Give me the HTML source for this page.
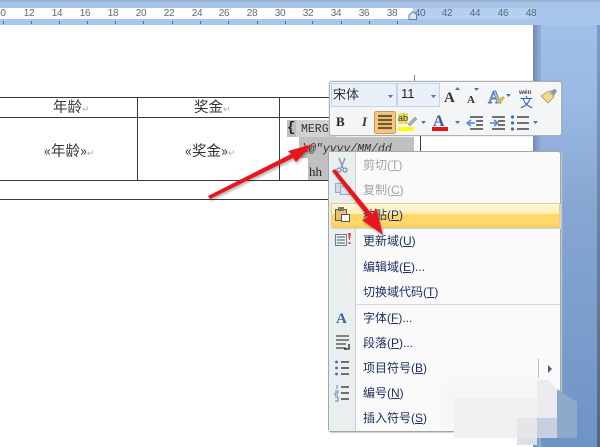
<!DOCTYPE html>
<html><head><meta charset="utf-8">
<style>
html,body{margin:0;padding:0;width:600px;height:447px;overflow:hidden;background:#fff}
body{font-family:"Liberation Sans","Noto Sans CJK SC",sans-serif}
#w{position:absolute;left:0;top:0;width:600px;height:447px;overflow:hidden;filter:blur(.35px)}
.a{position:absolute}
.r{position:absolute;top:8px;font-size:10px;line-height:11px;color:#5a6a80;width:20px;text-align:center;letter-spacing:-.3px}
.t{position:absolute;top:21px;width:1px;height:3px;background:#55667c}
.l{position:absolute;background:#3a3a3a}
.c{position:absolute;font-family:"Noto Sans CJK SC",sans-serif;font-size:14.500px;line-height:18px;color:#333;white-space:nowrap}
.m{position:absolute;left:363px;font-size:12px;line-height:16px;color:#1f2f66;white-space:nowrap;font-family:"Liberation Sans","Noto Sans CJK SC",sans-serif}
.m u{text-underline-offset:1px}
.d{color:#a3a3a3}
</style></head>
<body><div id="w">
<!-- right background -->
<div class="a" style="left:533px;top:0;width:67px;height:447px;background:linear-gradient(#a3c2e9 0,#9abae4 100px,#86a6d2 210px,#6d94c6 447px)"></div>
<div class="a" style="left:533px;top:25px;width:8px;height:422px;background:linear-gradient(90deg,#6f8cb8,#8fafdc)"></div>
<div class="a" style="left:597px;top:25px;width:3px;height:422px;background:linear-gradient(#7b9ccb,#5a6478)"></div>
<!-- top -->
<div class="a" style="left:0;top:0;width:600px;height:2px;background:#9db0cc"></div>
<div class="a" style="left:0;top:2px;width:600px;height:6px;background:#a5c3e8"></div>
<div class="a" style="left:0;top:8px;width:600px;height:17px;background:#a8c5ea"></div>
<div class="a" style="left:0;top:8px;width:413px;height:11px;background:#fff"></div>
<div class="a" style="left:413px;top:8px;width:122px;height:11px;background:#b6cfee"></div>
<div class="a" style="left:0;top:25px;width:533px;height:422px;background:#fff"></div>
<!-- ruler -->
<div class="r" style="left:-7px">0</div><div class="r" style="left:19px">12</div><div class="r" style="left:47px">14</div><div class="r" style="left:75px">16</div><div class="r" style="left:103px">18</div><div class="r" style="left:131px">20</div><div class="r" style="left:159px">22</div><div class="r" style="left:187px">24</div><div class="r" style="left:214px">26</div><div class="r" style="left:242px">28</div><div class="r" style="left:270px">30</div><div class="r" style="left:298px">32</div><div class="r" style="left:326px">34</div><div class="r" style="left:354px">36</div><div class="r" style="left:382px">38</div><div class="r" style="left:410px">40</div><div class="r" style="left:437px">42</div><div class="r" style="left:465px">44</div><div class="r" style="left:493px">46</div><div class="r" style="left:521px">48</div>
<div class="t" style="left:3px"></div><div class="t" style="left:31px"></div><div class="t" style="left:59px"></div><div class="t" style="left:87px"></div><div class="t" style="left:115px"></div><div class="t" style="left:143px"></div><div class="t" style="left:172px"></div><div class="t" style="left:200px"></div><div class="t" style="left:228px"></div><div class="t" style="left:257px"></div><div class="t" style="left:285px"></div><div class="t" style="left:312px"></div><div class="t" style="left:341px"></div><div class="t" style="left:369px"></div><div class="t" style="left:397px"></div>
<svg class="a" style="left:408px;top:10px" width="10" height="10"><path d="M1 9.500V5L5 1.500L8.500 4.500V9.500Z" fill="#dbe7f6" stroke="#5f7ea6"/></svg>
<!-- table -->
<div class="a" style="left:414px;top:75px;width:1px;height:6px;background:#888"></div>
<div class="l" style="left:0;top:97px;width:420px;height:1px"></div>
<div class="l" style="left:0;top:117px;width:420px;height:1px"></div>
<div class="l" style="left:0;top:180px;width:420px;height:1px"></div>
<div class="l" style="left:0;top:199px;width:420px;height:1px"></div>
<div class="l" style="left:137px;top:97px;width:1px;height:84px"></div>
<div class="l" style="left:279px;top:97px;width:1px;height:84px"></div>
<div class="l" style="left:420px;top:97px;width:1px;height:84px"></div>
<div class="c" style="left:53px;top:98px">年龄<span style="color:#aaa;font-size:9px">↵</span></div>
<div class="c" style="left:194px;top:98px">奖金<span style="color:#aaa;font-size:9px">↵</span></div>
<div class="c" style="left:44px;top:142px">«年龄»<span style="color:#aaa;font-size:9px">↵</span></div>
<div class="c" style="left:185px;top:142px">«奖金»<span style="color:#aaa;font-size:9px">↵</span></div>
<!-- selected field -->
<div class="a" style="left:287px;top:120px;width:9px;height:17px;background:#bdbdbd"></div>
<div class="a" style="left:296px;top:120px;width:40px;height:17px;background:#d2d2d2"></div>
<div class="a" style="left:299px;top:137px;width:115px;height:21px;background:#c0c0c0"></div>
<div class="a" style="left:308px;top:158px;width:30px;height:22px;background:#c0c0c0"></div>
<div class="a" style="left:287px;top:120px;font:bold 14px/17px 'Liberation Mono',monospace;color:#222">{</div>
<div class="a" style="left:301px;top:122px;font:11.500px/15px 'Liberation Mono',monospace;color:#333;white-space:nowrap">MERGE</div>
<div class="a" style="left:302px;top:142px;font:italic 11.500px/15px 'Liberation Mono',monospace;color:#333;white-space:nowrap">\@"yyyy/MM/dd</div>
<div class="a" style="left:309px;top:164px;font:13px/16px 'Liberation Serif',serif;color:#222">hh</div>
<!-- mini toolbar -->
<div class="a" style="left:329px;top:81px;width:231px;height:53px;background:#f4f5f6;border:1px solid #aeb2b8;border-radius:3px;box-shadow:0 0 1px #999"></div>
<div class="a" style="left:331px;top:83px;width:66px;height:24px;background:#e9f0fa;border:1px solid #c4d4ea;box-sizing:border-box"></div>
<div class="a" style="left:397px;top:83px;width:43px;height:24px;background:#e9f0fa;border:1px solid #c4d4ea;box-sizing:border-box"></div>
<div class="a" style="left:333px;top:85px;font:13px/18px 'Noto Sans CJK SC',sans-serif;color:#333">宋体</div>
<div class="a" style="left:401px;top:85px;font:13px/18px 'Liberation Sans',sans-serif;color:#222">11</div>
<svg class="a" style="left:329px;top:81px" width="232" height="54">
 <g fill="#4a72aa">
  <path d="M59 14h5l-2.500 3zM102 14h5l-2.500 3zM177 13h5l-2.500 3z"/>
  <path d="M92 40h5l-2.500 3zM126 40h5l-2.500 3zM204 40h5l-2.500 3z"/>
  <path d="M126 9h5l-2.500-3zM145 7h5l-2.500 3z"/>
 </g>
 <text x="115" y="21" font-family="Liberation Serif" font-weight="bold" font-size="15" fill="#333">A</text>
 <text x="138" y="22" font-family="Liberation Serif" font-weight="bold" font-size="11" fill="#333">A</text>
 <text x="159" y="22" font-family="Liberation Serif" font-weight="bold" font-size="18" fill="#a9c0e6" stroke="#3c66a8" stroke-width=".7">A</text>
 <path d="M167 20l7-5 2 2-6 6z" fill="#d8b85a"/>
 <text x="190" y="13" font-family="Liberation Sans" font-weight="bold" font-size="6.500" fill="#444">wén</text>
 <text x="191" y="26" font-family="Noto Sans CJK SC" font-size="13" fill="#2d5fb4">文</text>
 <path d="M212 15l7 7 6-6-5-6z" fill="#f0d890" stroke="#a89048" stroke-width=".7"/>
 <path d="M221 10l5-2 2 2-3 5z" fill="#8b98aa"/>
 <!-- row 2 -->
 <text x="7" y="45" font-family="Liberation Serif" font-weight="bold" font-size="13" fill="#222">B</text>
 <text x="33" y="45" font-family="Liberation Serif" font-weight="bold" font-style="italic" font-size="13" fill="#333">I</text>
 <rect x="45.500" y="30.500" width="21" height="22" rx="2" fill="#f9c680" stroke="#c69a5c"/>
 <path d="M49 35h14M49 39h14M49 43h14M49 47h14" stroke="#6e5a33" stroke-width="2.200"/>
 <rect x="69" y="32" width="10" height="11" fill="#e8e060"/>
 <text x="69" y="40" font-family="Liberation Sans" font-size="9" fill="#333">ab</text>
 <path d="M79 43l7-7 2 2-7 7z" fill="#9fb0c8" stroke="#667" stroke-width=".4"/>
 <rect x="69" y="46" width="16" height="4" fill="#ffff00"/>
 <text x="104" y="45" font-family="Liberation Serif" font-weight="bold" font-size="16" fill="#2d5fa8">A</text>
 <rect x="103" y="46" width="16" height="4" fill="#ee1111"/>
 <path d="M141 36h13M147 40h7M147 44h7M141 48h13" stroke="#444" stroke-width="1.600"/>
 <path d="M146 42h-6M142 39l-4 3 4 3" stroke="#4a86d8" stroke-width="1.500" fill="none"/>
 <path d="M163 36h13M169 40h7M169 44h7M163 48h13" stroke="#444" stroke-width="1.600"/>
 <path d="M161 42h7M165 39l4 3-4 3" stroke="#4a86d8" stroke-width="1.500" fill="none"/>
 <path d="M188 36h12M188 42h12M188 48h12" stroke="#444" stroke-width="1.500"/>
 <circle cx="183.500" cy="36" r="1.600" fill="#3d6db4"/><circle cx="183.500" cy="42" r="1.600" fill="#3d6db4"/><circle cx="183.500" cy="48" r="1.600" fill="#3d6db4"/>
</svg>
<!-- context menu -->
<div class="a" style="left:328px;top:151px;width:233px;height:281px;background:#fafafa;border:1px solid #a4a6a8;border-radius:3px;box-sizing:border-box;box-shadow:1px 1px 1px #ccc"></div>
<div class="a" style="left:329px;top:152px;width:26px;height:279px;background:#e9eeee;border-right:1px solid #c8cdce"></div>
<div class="a" style="left:331px;top:203px;width:229px;height:25px;box-sizing:border-box;border:1px solid #e0d090;background:linear-gradient(#fff8dc 0,#ffeeb8 42%,#ffd560 46%,#ffd970 80%,#ffcf55 100%);box-shadow:1px 1px 0 #d4d4d4"></div>
<div class="a" style="left:356px;top:304px;width:204px;height:1px;background:#d8d8d8"></div>
<div class="a" style="left:538px;top:359px;width:1px;height:19px;background:#b8b8b8"></div>
<svg class="a" style="left:329px;top:152px" width="30" height="280">
 <path d="M10 6l4 10M16 6l-4 10" stroke="#8b9bb4" stroke-width="1.500"/>
 <circle cx="10" cy="18" r="2" fill="none" stroke="#7d90b0" stroke-width="1.300"/><circle cx="16" cy="18" r="2" fill="none" stroke="#7d90b0" stroke-width="1.300"/>
 <rect x="6.500" y="31.500" width="9" height="9" fill="#cdd8e8" stroke="#9aaac4"/><rect x="11.500" y="34.500" width="9" height="8" fill="#dce4f0" stroke="#9aaac4"/>
 <rect x="6.500" y="57.500" width="11" height="11" fill="#e4c070" stroke="#6b5a30"/><rect x="9" y="55" width="6" height="4" fill="#777"/><rect x="12.500" y="62.500" width="8" height="7" fill="#f4f4f4" stroke="#555"/>
 <rect x="6.500" y="82.500" width="11" height="11" fill="#f2f2f2" stroke="#6f7f96"/><path d="M8 85h8M8 88h8M8 91h8" stroke="#4a5a70"/><path d="M19 81h3l-1 7h-1z" fill="#d44"/><rect x="19.500" y="90" width="2" height="2" fill="#d44"/>
 <text x="7" y="171" font-family="Liberation Serif" font-weight="bold" font-size="15" fill="#3c6498">A</text>
 <path d="M7 184h13M7 188h13M7 192h10M7 196h10" stroke="#444" stroke-width="1.200"/><path d="M20 192v5h-5" stroke="#222" stroke-width="1.300" fill="none"/>
 <path d="M12 210h8M12 216h8M12 222h8" stroke="#444" stroke-width="1.400"/><circle cx="7.500" cy="210" r="1.400" fill="#3d6db4"/><circle cx="7.500" cy="216" r="1.400" fill="#3d6db4"/><circle cx="7.500" cy="222" r="1.400" fill="#3d6db4"/>
 <path d="M12 235h8M12 241h8M12 247h8" stroke="#444" stroke-width="1.400"/><path d="M8 233v4M6 239h3v2h-3v2h3M6 245h3v4h-3" stroke="#3d6db4" fill="none" stroke-width=".8"/>
</svg>
<div class="m d" style="top:157px">剪切(<u>T</u>)</div>
<div class="m d" style="top:182px">复制(<u>C</u>)</div>
<div class="m" style="top:207px">粘贴(<u>P</u>)</div>
<div class="m" style="top:233px">更新域(<u>U</u>)</div>
<div class="m" style="top:259px">编辑域(<u>E</u>)...</div>
<div class="m" style="top:284px">切换域代码(<u>T</u>)</div>
<div class="m" style="top:310px">字体(<u>F</u>)...</div>
<div class="m" style="top:335px">段落(<u>P</u>)...</div>
<div class="m" style="top:360px">项目符号(<u>B</u>)</div>
<div class="m" style="top:385px">编号(<u>N</u>)</div>
<div class="m" style="top:410px">插入符号(<u>S</u>)</div>
<svg class="a" style="left:547px;top:365px" width="6" height="8"><path d="M1 0l4 4-4 4z" fill="#4a5f86"/></svg>
<!-- watermark blocks -->
<div class="a" style="left:442px;top:380px;width:100px;height:44px;background:#f6f6f6;filter:blur(3px)"></div>
<div class="a" style="left:454px;top:398px;width:83px;height:40px;background:#f1f1f1"></div>
<div class="a" style="left:517px;top:418px;width:20px;height:20px;background:#e4e6ea"></div>
<div class="a" style="left:517px;top:438px;width:20px;height:7px;background:#dce0e8"></div>
<svg class="a" style="left:537px;top:378px" width="40" height="60"><path d="M0 2H12L20 12V40H0Z" fill="#ececf0"/><rect x="0" y="40" width="20" height="20" fill="#c5d0e0"/><path d="M20 11L40 24V60H20Z" fill="#8fa9cc"/></svg>
<!-- red arrows -->
<svg class="a" style="left:0;top:0" width="600" height="447">
 <defs><filter id="s" x="-10%" y="-10%" width="120%" height="120%"><feDropShadow dx="1" dy="2" stdDeviation="1.200" flood-color="#000" flood-opacity=".3"/></filter></defs>
 <g filter="url(#s)" fill="#e8141c">
  <path d="M208 196L291 154L288 151L313 144L296 162L293 158L210 199Z"/>
  <path d="M332 171L335 169L372 214L376 208L383 235L362 220L368 217Z"/>
 </g>
</svg>
</div></body></html>
